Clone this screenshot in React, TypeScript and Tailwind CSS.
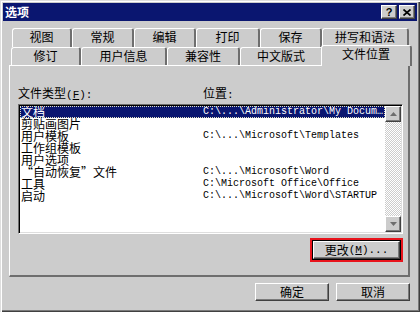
import React from "react";

const cjk = "font-['Noto_Sans_CJK_SC','Noto_Sans_CJK_JP',sans-serif]";
const mono = "font-['Liberation_Mono',monospace]";

// classic raised 3D face
const raised =
  "bg-[#cccccc] border border-t-white border-l-white border-r-[#404040] border-b-[#404040] shadow-[inset_-1px_-1px_#7a7a7a]";

const row1 = [
  { label: "视图", w: "w-[60px]" },
  { label: "常规", w: "w-[62px]" },
  { label: "编辑", w: "w-[62px]" },
  { label: "打印", w: "w-[64px]" },
  { label: "保存", w: "w-[62px]" },
  { label: "拼写和语法", w: "w-[87px]" },
];

const row2 = [
  { label: "修订", w: "w-[70px]" },
  { label: "用户信息", w: "w-[86px]" },
  { label: "兼容性", w: "w-[73px]" },
  { label: "中文版式", w: "w-[83px]" },
];

const files = [
  ["文档", "C:\\...\\Administrator\\My Docum…"],
  ["剪贴画图片", ""],
  ["用户模板", "C:\\...\\Microsoft\\Templates"],
  ["工作组模板", ""],
  ["用户选项", ""],
  ["“自动恢复”文件", "C:\\...\\Microsoft\\Word"],
  ["工具", "C:\\Microsoft Office\\Office"],
  ["启动", "C:\\...\\Microsoft\\Word\\STARTUP"],
];

const tabBase =
  "h-full border-t border-l border-r-2 border-t-white border-l-white border-r-[#6e6e6e] rounded-t-[3px] text-center text-[12px] leading-[12px] pt-[2px] text-black";

const Arrow = ({ down }: { down?: boolean }) => (
  <svg width="7" height="5" viewBox="0 0 7 5">
    {down ? (
      <polygon points="0,0 7,0 3.5,4" fill="#6e6e6e" />
    ) : (
      <polygon points="3.5,0 7,4 0,4" fill="#6e6e6e" />
    )}
  </svg>
);

export default function App() {
  return (
    <div
      className={`${cjk} w-[420px] h-[312px] bg-[#cccccc] p-[3px] flex flex-col shadow-[inset_1px_1px_#dedede,inset_2px_2px_#ffffff,inset_-1px_-1px_#404040,inset_-2px_-2px_#7a7a7a]`}
    >
      {/* title bar */}
      <div className="h-[18px] bg-[#0a1670] flex items-center pl-[2px] pr-[2px]">
        <span className="text-white font-bold text-[12px] leading-[12px]">选项</span>
        <div className="ml-auto flex gap-[2px]">
          <div className={`${raised} w-[16px] h-[14px] flex items-center justify-center`}>
            <span className="font-['Liberation_Sans',sans-serif] font-bold text-[11px] leading-[11px] text-black">?</span>
          </div>
          <div className={`${raised} w-[16px] h-[14px] flex items-center justify-center`}>
            <svg width="8" height="7" viewBox="0 0 8 7">
              <path d="M0.5 0.5 L7.5 6.5 M7.5 0.5 L0.5 6.5" stroke="#000" strokeWidth="1.7" />
            </svg>
          </div>
        </div>
      </div>

      {/* body */}
      <div className="pl-[6px] pt-[7px]">
        <div className="w-[401px]">
          <div className="flex h-[19px] pl-[3px]">
            {row1.map((t) => (
              <div key={t.label} className={`${tabBase} ${t.w} pt-[2px]`}>
                {t.label}
              </div>
            ))}
          </div>
          <div className="flex h-[18px] pl-[2px]">
            {row2.map((t) => (
              <div key={t.label} className={`${tabBase} ${t.w}`}>
                {t.label}
              </div>
            ))}
            <div className="relative z-10 -ml-[2px] -mr-[2px] -mt-[2px] h-[21px] w-[91px] bg-[#cccccc] border-t border-l border-r-2 border-t-white border-l-white border-r-[#6e6e6e] rounded-t-[3px] text-center text-[12px] leading-[12px] pt-[2px] text-black">
              文件位置
            </div>
          </div>

          {/* tab panel */}
          <div className="h-[212px] border-t border-l border-r-2 border-b-2 border-t-white border-l-white border-r-[#6e6e6e] border-b-[#6e6e6e] px-[8px] pt-[21px]">
            <div className="flex text-[12px] leading-[12px] text-black">
              <div className="w-[185px]">
                文件类型
                <span className={`${mono} text-[11px]`}>
                  (<u>F</u>):
                </span>
              </div>
              <div>
                位置<span className={`${mono} text-[11px]`}>:</span>
              </div>
            </div>

            <div className="mt-[3px] w-[385px] h-[130px] bg-white border border-t-[#6e6e6e] border-l-[#6e6e6e] border-r-white border-b-white shadow-[inset_1px_1px_#000000,inset_-1px_-1px_#dedede] p-[1px] flex">
              <div className="flex-1 flex flex-col">
                {files.map(([name, path], i) => (
                  <div
                    key={name}
                    className={`flex h-[12px] text-[12px] leading-[12px] ${
                      i === 0
                        ? "bg-[#0a1670] text-white outline-1 outline-dotted outline-[#e0e0c0] -outline-offset-1"
                        : "text-black"
                    }`}
                  >
                    <span className="w-[183px] pl-[1px] whitespace-nowrap">{name}</span>
                    <span className={`${mono} text-[10px] leading-[12px] whitespace-nowrap`}>{path}</span>
                  </div>
                ))}
              </div>
              <div className="w-[16px] flex flex-col">
                <div className={`${raised} h-[16px] flex items-center justify-center`}>
                  <Arrow />
                </div>
                <div className="flex-1 [background-image:repeating-conic-gradient(#ffffff_0%_25%,#cccccc_0%_50%)] [background-size:2px_2px]" />
                <div className={`${raised} h-[16px] flex items-center justify-center`}>
                  <Arrow down />
                </div>
              </div>
            </div>

            <div className="mt-[4px] w-[385px] flex justify-end">
              <div className="w-[93px] h-[24px] border-2 border-[#e8141c]">
                <div className="h-full border border-black">
                  <div className={`${raised} h-full flex items-center justify-center text-[12px] leading-[12px] text-black`}>
                    更改
                    <span className={`${mono} text-[11px]`}>
                      (<u>M</u>)...
                    </span>
                  </div>
                </div>
              </div>
            </div>
          </div>

          {/* dialog buttons */}
          <div className="mt-[6px] flex justify-end gap-[7px]">
            <div className={`${raised} w-[74px] h-[18px] flex items-center justify-center text-[12px] leading-[12px] text-black`}>
              确定
            </div>
            <div className={`${raised} w-[74px] h-[18px] flex items-center justify-center text-[12px] leading-[12px] text-black`}>
              取消
            </div>
          </div>
        </div>
      </div>
    </div>
  );
}
